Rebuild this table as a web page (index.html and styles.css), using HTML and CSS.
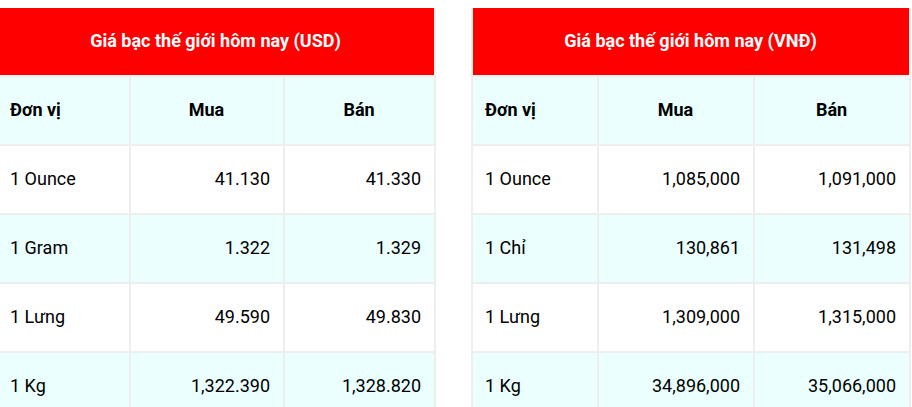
FILE: index.html
```html
<!DOCTYPE html>
<html lang="vi">
<head>
<meta charset="utf-8">
<title>Giá bạc thế giới hôm nay</title>
<link rel="stylesheet" href="styles.css">
</head>
<body>
<div class="page">
  <table class="price-table price-table--usd">
    <colgroup>
      <col class="col-unit-usd">
      <col class="col-buy-usd">
      <col class="col-sell-usd">
    </colgroup>
    <thead>
      <tr><th class="title" colspan="3">Giá bạc thế giới hôm nay (USD)</th></tr>
      <tr class="head-row"><th class="left">Đơn vị</th><th>Mua</th><th>Bán</th></tr>
    </thead>
    <tbody>
      <tr><td class="left">1 Ounce</td><td>41.130</td><td>41.330</td></tr>
      <tr class="alt"><td class="left">1 Gram</td><td>1.322</td><td>1.329</td></tr>
      <tr><td class="left">1 Lưng</td><td>49.590</td><td>49.830</td></tr>
      <tr class="alt"><td class="left">1 Kg</td><td>1,322.390</td><td>1,328.820</td></tr>
    </tbody>
  </table>
  <table class="price-table price-table--vnd">
    <colgroup>
      <col class="col-unit-vnd">
      <col class="col-buy-vnd">
      <col class="col-sell-vnd">
    </colgroup>
    <thead>
      <tr><th class="title" colspan="3">Giá bạc thế giới hôm nay (VNĐ)</th></tr>
      <tr class="head-row"><th class="left">Đơn vị</th><th>Mua</th><th>Bán</th></tr>
    </thead>
    <tbody>
      <tr><td class="left">1 Ounce</td><td>1,085,000</td><td>1,091,000</td></tr>
      <tr class="alt"><td class="left">1 Chỉ</td><td>130,861</td><td>131,498</td></tr>
      <tr><td class="left">1 Lưng</td><td>1,309,000</td><td>1,315,000</td></tr>
      <tr class="alt"><td class="left">1 Kg</td><td>34,896,000</td><td>35,066,000</td></tr>
    </tbody>
  </table>
</div>
</body>
</html>
```

FILE: styles.css
```css
html, body {
  margin: 0;
  padding: 0;
  background: #ffffff;
}

body {
  font-family: Roboto, "Liberation Sans", Arial, sans-serif;
  color: #000000;
  overflow: hidden;
}

.page {
  display: flex;
  align-items: flex-start;
  gap: 35px;
  padding-top: 8px;
}

.price-table {
  flex: none;
  width: 440px;
  table-layout: fixed;
  border-collapse: separate;
  border-spacing: 0;
  border-left: 2px solid #eeeeee;
  font-size: 18px;
  line-height: 21px;
}

.price-table--usd {
  margin-left: -4px;
}

.col-unit-usd { width: 133px; }
.col-buy-usd { width: 154px; }
.col-sell-usd { width: 151px; }

.col-unit-vnd { width: 126px; }
.col-buy-vnd { width: 156px; }
.col-sell-vnd { width: 156px; }

.price-table th,
.price-table td {
  padding: 22px 13px 24px 12px;
  border-right: 2px solid #eeeeee;
  border-bottom: 2px solid #eeeeee;
  white-space: nowrap;
}

.price-table td {
  text-align: right;
  font-weight: 400;
}

.price-table th {
  text-align: center;
  font-weight: 700;
}

.price-table .left {
  text-align: left;
}

.price-table .title {
  background: #ff0000;
  color: #ffffff;
}

.head-row th,
.alt td {
  background: #ebffff;
}
```
